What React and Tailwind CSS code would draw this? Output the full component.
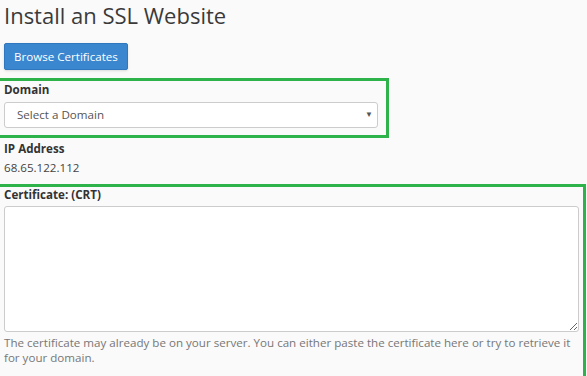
import { useState } from "react";

const App = () => {
  const [domain, setDomain] = useState("");
  const [crt, setCrt] = useState("");

  return (
    <div
      className="relative w-[587px] h-[376px] overflow-hidden bg-[#fafafa] text-[#333] px-[4px]"
      style={{ fontFamily: '"Open Sans", "Liberation Sans", sans-serif' }}>
      <h1 className="text-[22px] leading-[30px] font-normal text-[#3a3a3a]">Install an SSL Website</h1>

      <button className="block mt-[13px] h-[27px] px-[9px] rounded-[2px] bg-[#3a87d0] border border-[#2f78bf] text-white text-[11.6px] shadow-sm">
        Browse Certificates
      </button>

      <label className="block mt-[11px] text-[11.6px] font-bold leading-[17px]">Domain</label>
      <div className="relative mt-[4px] w-[374px]">
        <select
          value={domain}
          onChange={(e) => setDomain(e.target.value)}
          className="block w-full h-[26px] appearance-none bg-white border border-[#ccc] rounded-[3px] pl-[12px] text-[11.6px] text-[#555] outline-none">
          <option value="">Select a Domain</option>
        </select>
        <span className="absolute right-[5px] top-[7px] text-[8px] leading-[10px] text-[#555] pointer-events-none">▼</span>
      </div>

      <div className="mt-[12px] text-[11.6px] font-bold leading-[17px]">IP Address</div>
      <div className="mt-[2px] text-[11.6px] leading-[17px] text-[#444]">68.65.122.112</div>

      <label className="block mt-[10px] text-[11.6px] font-bold leading-[17px]">Certificate: (CRT)</label>
      <textarea
        value={crt}
        onChange={(e) => setCrt(e.target.value)}
        className="block mt-[3px] w-[575px] h-[126px] bg-white border border-[#ccc] rounded-[3px] outline-none"
      />
      <p className="mt-[3px] text-[11.6px] leading-[15px] text-[#777] w-[575px]">
        The certificate may already be on your server. You can either paste the certificate here or try to retrieve it for your domain.
      </p>

      {/* highlight boxes */}
      <div className="absolute left-[-4px] top-[78px] w-[393px] h-[60px] border-[3px] border-[#2db34a] pointer-events-none" />
      <div className="absolute left-[-4px] top-[184px] w-[590px] h-[220px] border-[3px] border-[#2db34a] pointer-events-none" />
    </div>
  );
};

export default App;
